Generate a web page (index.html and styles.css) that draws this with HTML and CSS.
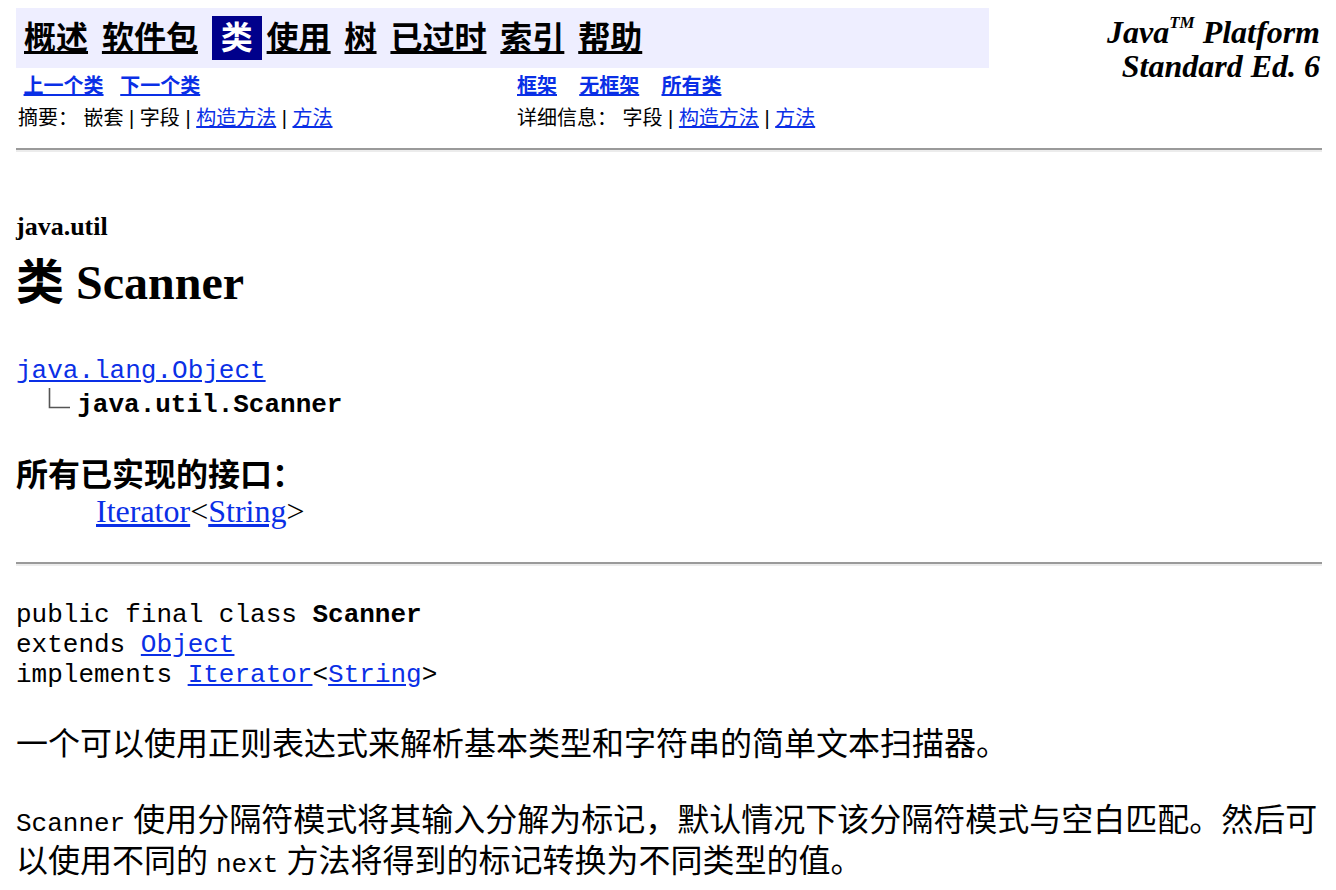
FILE: index.html
```html
<!DOCTYPE html>
<html lang="zh-CN">
<head>
<meta charset="utf-8">
<title>Scanner (Java Platform SE 6)</title>
<link rel="stylesheet" href="styles.css">
</head>
<body>
<div class="page">
  <div class="navbar">
    <div class="nav-main">
      <span class="cell"><a class="nav-link" href="#">概述</a>&nbsp;</span>
      <span class="cell"><a class="nav-link" href="#">软件包</a>&nbsp;</span>
      <span class="cell rev">&nbsp;类&nbsp;</span>
      <span class="cell"><a class="nav-link" href="#">使用</a>&nbsp;</span>
      <span class="cell"><a class="nav-link" href="#">树</a>&nbsp;</span>
      <span class="cell"><a class="nav-link" href="#">已过时</a>&nbsp;</span>
      <span class="cell"><a class="nav-link" href="#">索引</a>&nbsp;</span>
      <span class="cell"><a class="nav-link" href="#">帮助</a>&nbsp;</span>
    </div>
    <div class="brand"><b>Java<sup class="tm">TM</sup>&nbsp;Platform<br>Standard&nbsp;Ed. 6</b></div>
    <div class="sub">&nbsp;<a class="lnk" href="#"><b>上一个类</b></a>&nbsp; &nbsp;<a class="lnk" href="#"><b>下一个类</b></a></div>
    <div class="sub"><a class="lnk" href="#"><b>框架</b></a> &nbsp; &nbsp;<a class="lnk" href="#"><b>无框架</b></a> &nbsp; &nbsp;<a class="lnk" href="#"><b>所有类</b></a></div>
    <div class="sub">摘要：&nbsp;嵌套&nbsp;|&nbsp;字段&nbsp;|&nbsp;<a class="lnk" href="#">构造方法</a>&nbsp;|&nbsp;<a class="lnk" href="#">方法</a></div>
    <div class="sub">详细信息：&nbsp;字段&nbsp;|&nbsp;<a class="lnk" href="#">构造方法</a>&nbsp;|&nbsp;<a class="lnk" href="#">方法</a></div>
  </div>

  <hr class="rule rule-top">

  <h2 class="class-title">
    <span class="pkg">java.util</span>
    <span class="name">类 Scanner</span>
  </h2>

  <pre class="hierarchy"><a class="lnk" href="#">java.lang.Object</a>
  <svg class="inherit" width="30" height="25" viewBox="0 0 30 25" aria-label="继承者"><path d="M2.5 0 V19.5 H23" fill="none" stroke="#555" stroke-width="1.6"/></svg><b>java.util.Scanner</b></pre>

  <dl class="impl">
    <dt>所有已实现的接口：</dt>
    <dd><a class="lnk" href="#">Iterator</a>&lt;<a class="lnk" href="#">String</a>&gt;</dd>
  </dl>

  <hr class="rule rule-mid">

  <pre class="sig">public final class <b>Scanner</b>
extends <a class="lnk" href="#">Object</a>
implements <a class="lnk" href="#">Iterator</a>&lt;<a class="lnk" href="#">String</a>&gt;</pre>

  <p class="desc desc-first">一个可以使用正则表达式来解析基本类型和字符串的简单文本扫描器。</p>

  <p class="desc desc-second"><code class="code">Scanner</code> 使用分隔符模式将其输入分解为标记，默认情况下该分隔符模式与空白匹配。然后可以使用不同的 <code class="code">next</code> 方法将得到的标记转换为不同类型的值。</p>
</div>
</body>
</html>
```

FILE: styles.css
```css
html, body {
  margin: 0;
  padding: 0;
  background: #ffffff;
}

body {
  font-family: "Liberation Serif", "Noto Sans CJK SC", serif;
  font-size: 32px;
  color: #000000;
}

.page {
  padding: 8px 14px 0 16px;
}

/* ---------- navigation ---------- */
.navbar {
  display: grid;
  grid-template-columns: 499px 474px 1fr;
  grid-template-rows: 60px 32px 32px;
}

.nav-main {
  grid-column: 1 / span 2;
  grid-row: 1;
  background: #eeeeff;
  padding: 8px;
  display: flex;
  gap: 5px;
  font-family: "Liberation Sans", "Noto Sans CJK SC", sans-serif;
  font-size: 32px;
  font-weight: bold;
  line-height: 44px;
  white-space: nowrap;
}

.cell {
  display: block;
}

.nav-link {
  color: #000000;
  text-decoration: underline;
}

.rev {
  background: #00008b;
  color: #ffffff;
}

.brand {
  grid-column: 3;
  grid-row: 1 / span 3;
  text-align: right;
  padding: 7px 2px 0;
  font-family: "Liberation Serif", serif;
  font-style: italic;
  font-size: 32px;
  line-height: 34px;
  white-space: nowrap;
}

.tm {
  font-size: 17px;
  line-height: 0;
  vertical-align: 15px;
}

.sub {
  padding: 4px 2px 0;
  font-family: "Liberation Sans", "Noto Sans CJK SC", sans-serif;
  font-size: 20px;
  line-height: 28px;
  white-space: nowrap;
}

.lnk {
  color: #0a2fe6;
  text-decoration: underline;
}

/* ---------- rules ---------- */
.rule {
  border: 0;
  border-top: 2px solid #9a9a9a;
  border-bottom: 2px solid #ececec;
  height: 0;
  margin: 0;
}

.rule-top {
  margin-top: 16px;
}

.rule-mid {
  margin-top: 33px;
}

/* ---------- class header ---------- */
.class-title {
  margin: 60px 0 0;
  font-family: "Liberation Serif", "Noto Sans CJK SC", serif;
  font-weight: bold;
}

.pkg {
  display: block;
  font-size: 26px;
  line-height: 30px;
}

.name {
  display: block;
  font-size: 48px;
  line-height: 56px;
  margin-top: 13px;
}

.hierarchy {
  margin: 43px 0 0;
  font-family: "Liberation Mono", monospace;
  font-size: 26px;
  line-height: 34px;
}

.inherit {
  display: inline-block;
  vertical-align: -1px;
}

.impl {
  margin: 35px 0 0;
  line-height: 36px;
}

.impl dt {
  font-weight: bold;
}

.impl dd {
  margin: 0 0 0 80px;
}

.sig {
  margin: 34px 0 0;
  font-family: "Liberation Mono", monospace;
  font-size: 26px;
  line-height: 30px;
}

.desc {
  margin: 0;
  line-height: 41px;
}

.desc-first {
  margin-top: 34px;
}

.desc-second {
  margin-top: 35px;
}

.code {
  font-family: "Liberation Mono", monospace;
  font-size: 26px;
  line-height: 1;
}
```
